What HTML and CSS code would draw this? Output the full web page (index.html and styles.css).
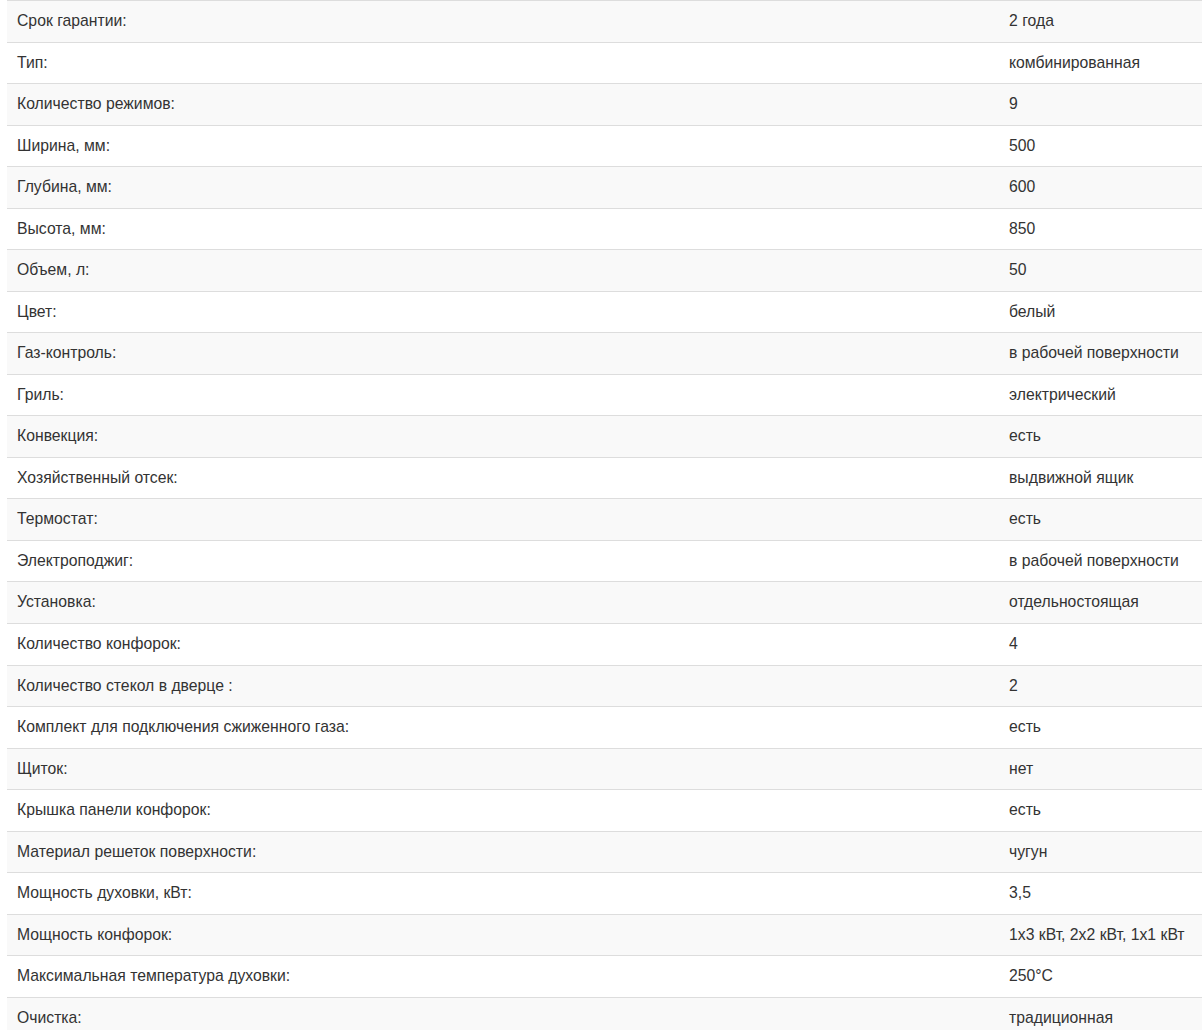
FILE: index.html
```html
<!DOCTYPE html>
<html lang="ru">
<head>
<meta charset="utf-8">
<link rel="stylesheet" href="styles.css">
</head>
<body>
<table class="specs">
<tbody>
<tr><td class="name">Срок гарантии:</td><td class="val">2 года</td></tr>
<tr><td class="name">Тип:</td><td class="val">комбинированная</td></tr>
<tr><td class="name">Количество режимов:</td><td class="val">9</td></tr>
<tr><td class="name">Ширина, мм:</td><td class="val">500</td></tr>
<tr><td class="name">Глубина, мм:</td><td class="val">600</td></tr>
<tr><td class="name">Высота, мм:</td><td class="val">850</td></tr>
<tr><td class="name">Объем, л:</td><td class="val">50</td></tr>
<tr><td class="name">Цвет:</td><td class="val">белый</td></tr>
<tr><td class="name">Газ-контроль:</td><td class="val">в рабочей поверхности</td></tr>
<tr><td class="name">Гриль:</td><td class="val">электрический</td></tr>
<tr><td class="name">Конвекция:</td><td class="val">есть</td></tr>
<tr><td class="name">Хозяйственный отсек:</td><td class="val">выдвижной ящик</td></tr>
<tr><td class="name">Термостат:</td><td class="val">есть</td></tr>
<tr><td class="name">Электроподжиг:</td><td class="val">в рабочей поверхности</td></tr>
<tr><td class="name">Установка:</td><td class="val">отдельностоящая</td></tr>
<tr><td class="name">Количество конфорок:</td><td class="val">4</td></tr>
<tr><td class="name">Количество стекол в дверце :</td><td class="val">2</td></tr>
<tr><td class="name">Комплект для подключения сжиженного газа:</td><td class="val">есть</td></tr>
<tr><td class="name">Щиток:</td><td class="val">нет</td></tr>
<tr><td class="name">Крышка панели конфорок:</td><td class="val">есть</td></tr>
<tr><td class="name">Материал решеток поверхности:</td><td class="val">чугун</td></tr>
<tr><td class="name">Мощность духовки, кВт:</td><td class="val">3,5</td></tr>
<tr><td class="name">Мощность конфорок:</td><td class="val">1x3 кВт, 2x2 кВт, 1x1 кВт</td></tr>
<tr><td class="name">Максимальная температура духовки:</td><td class="val">250°C</td></tr>
<tr><td class="name">Очистка:</td><td class="val">традиционная</td></tr>
</tbody>
</table>
</body>
</html>
```

FILE: styles.css
```css
html, body {
  margin: 0;
  padding: 0;
  background: #fff;
  overflow: hidden;
}
body {
  font-family: "Liberation Sans", Arial, sans-serif;
  font-size: 15.75px;
  color: #333;
}
.specs {
  margin-left: 7px;
  width: 1210px;
  border-collapse: collapse;
  border-spacing: 0;
  table-layout: fixed;
}
.specs td {
  padding: 8px 10px;
  line-height: 24.53px;
  border-top: 1px solid #ddd;
  vertical-align: top;
  white-space: nowrap;
}
.specs td.name {
  width: 972px;
}
.specs tr:nth-child(odd) td {
  background: #f9f9f9;
}
```
